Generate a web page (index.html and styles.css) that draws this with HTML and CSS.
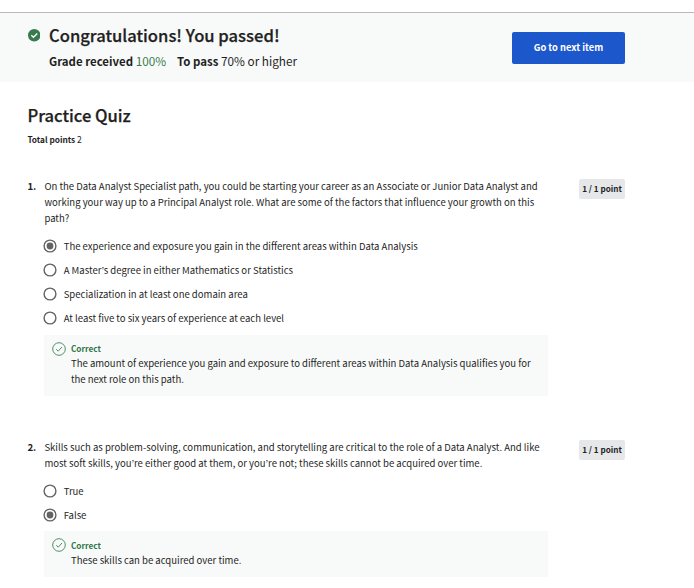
FILE: index.html
```html
<!DOCTYPE html>
<html lang="en">
<head>
<meta charset="utf-8">
<title>Practice Quiz</title>
<link rel="stylesheet" href="styles.css">
</head>
<body>
<svg class="defs" aria-hidden="true">
  <symbol id="check-outline" viewBox="0 0 14 14"><circle cx="7" cy="7" r="6.3"/><path d="M4.2 7.2 6.2 9.2 10 5"/></symbol>
  <symbol id="radio-off" viewBox="0 0 14 14"><circle cx="7" cy="7" r="5.9"/></symbol>
  <symbol id="radio-on" viewBox="0 0 14 14"><circle cx="7" cy="7" r="5.9"/><circle class="dot" cx="7" cy="7" r="3.4"/></symbol>
</svg>
<header class="banner">
  <svg class="passed" viewBox="0 0 12 12"><circle cx="6" cy="6" r="6"/><path d="M3.2 6.1 5.2 8 8.9 4.3"/></svg>
  <div class="summary">
    <h1>Congratulations! You passed!</h1>
    <p class="grades"><span><b>Grade received</b> <span class="score">100%</span></span><span><b>To pass</b> 70% or higher</span></p>
  </div>
  <button class="next">Go to next item</button>
</header>
<main>
  <h2>Practice Quiz</h2>
  <p class="total"><b>Total points</b> 2</p>

  <section class="question first">
    <span class="number">1.</span>
    <div class="body">
      <p class="prompt">On the Data Analyst Specialist path, you could be starting your career as an Associate or Junior Data Analyst and<br>working your way up to a Principal Analyst role. What are some of the factors that influence your growth on this<br>path?</p>
      <ul class="options">
        <li><svg class="radio"><use href="#radio-on"/></svg>The experience and exposure you gain in the different areas within Data Analysis</li>
        <li><svg class="radio"><use href="#radio-off"/></svg>A Master’s degree in either Mathematics or Statistics</li>
        <li><svg class="radio"><use href="#radio-off"/></svg>Specialization in at least one domain area</li>
        <li><svg class="radio"><use href="#radio-off"/></svg>At least five to six years of experience at each level</li>
      </ul>
      <div class="feedback">
        <svg class="check"><use href="#check-outline"/></svg>
        <div><strong>Correct</strong><p>The amount of experience you gain and exposure to different areas within Data Analysis qualifies you for<br>the next role on this path.</p></div>
      </div>
    </div>
    <span class="points">1 / 1 point</span>
  </section>

  <section class="question second">
    <span class="number">2.</span>
    <div class="body">
      <p class="prompt">Skills such as problem-solving, communication, and storytelling are critical to the role of a Data Analyst. And like<br>most soft skills, you’re either good at them, or you’re not; these skills cannot be acquired over time.</p>
      <ul class="options">
        <li><svg class="radio"><use href="#radio-off"/></svg>True</li>
        <li><svg class="radio"><use href="#radio-on"/></svg>False</li>
      </ul>
      <div class="feedback">
        <svg class="check"><use href="#check-outline"/></svg>
        <div><strong>Correct</strong><p>These skills can be acquired over time.</p></div>
      </div>
    </div>
    <span class="points">1 / 1 point</span>
  </section>
</main>
</body>
</html>
```
FILE: styles.css
```css
* { box-sizing: border-box; margin: 0; padding: 0; }
html { overflow: hidden; }
body {
  height: 588px;
  padding-top: 12px;
  background: #fff;
  color: #1f1f1f;
  font: 9.54px/16px "Noto Sans CJK JP", "Noto Sans", sans-serif;
}
.defs { display: none; }

.banner {
  display: flex;
  align-items: flex-start;
  height: 70px;
  padding: 0 69px 0 27.7px;
  border-top: 1px solid #b9b9b9;
  background: #f8faf9;
}
.passed { width: 12.5px; height: 12.5px; margin-top: 16px; fill: #387a4d; }
.passed path { fill: none; stroke: #fff; stroke-width: 1.3; }
.summary { flex: 1; margin-left: 8.8px; padding-top: 10px; }
h1, h2 {
  font-size: 16.6px;
  line-height: 24px;
  font-weight: 500;
  -webkit-text-stroke: 0.25px currentColor;
  white-space: nowrap;
}
.grades { display: flex; gap: 11px; margin-top: 4px; font-size: 11.77px; line-height: 20px; }
.grades b { font-size: 11.45px; }
.score { color: #387a4d; }
.next {
  width: 113px;
  height: 32px;
  margin-top: 19px;
  padding-bottom: 2px;
  border: 0;
  border-radius: 2px;
  background: #1d57cc;
  color: #fff;
  font: 700 9.32px/16px "Noto Sans CJK JP", "Noto Sans", sans-serif;
}

main { padding: 21px 69px 0 27.4px; }
.total { margin-top: 6px; font-size: 8.6px; line-height: 12px; }
.total b { font-size: 8.25px; }

.question { display: grid; grid-template-columns: 16.6px 504px 1fr; align-items: start; }
.first { margin-top: 33px; }
.second { margin-top: 43px; }
.number { font-weight: 700; font-size: 9.7px; }
.prompt { padding-left: 0.4px; font-size: 9.545px; white-space: nowrap; }
.options { list-style: none; margin-top: 8px; }
.options li { display: flex; align-items: center; height: 24px; }
.radio {
  width: 14px;
  height: 14px;
  margin: 0.5px 6.7px 0 -1px;
  fill: none;
  stroke: #636363;
  stroke-width: 1.4;
}
.dot { fill: #636363; stroke: none; }
.feedback {
  display: flex;
  gap: 5px;
  margin-top: 5px;
  padding: 6px 8px 9px;
  background: #f8faf9;
  white-space: nowrap;
}
.check { width: 14px; height: 14px; margin-top: 1px; fill: none; stroke: #3c8256; stroke-width: 0.9; }
.feedback strong { display: block; font-size: 8.2px; line-height: 14px; color: #2f7548; }
.second .feedback { margin-top: 4px; padding-top: 7px; }
.second .check { margin-top: 0; }
.points {
  justify-self: end;
  width: 46px;
  height: 20px;
  margin-top: 1px;
  border-radius: 2px;
  background: #e5e7e8;
  font-weight: 700;
  font-size: 8.12px;
  line-height: 19px;
  text-align: center;
  white-space: nowrap;
}
```
